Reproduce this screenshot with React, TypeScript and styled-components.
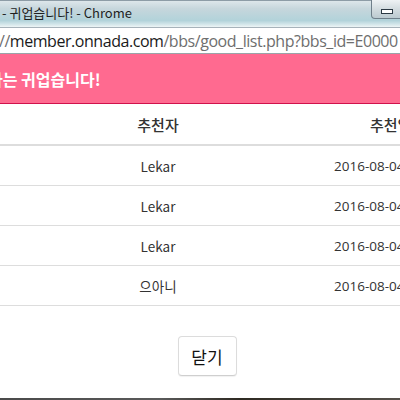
import React from 'react';
import styled, { createGlobalStyle } from 'styled-components';

const GlobalStyle = createGlobalStyle`
  html, body {
    margin: 0;
    padding: 0;
    width: 400px;
    height: 400px;
    overflow: hidden;
    background: #fff;
  }
  body {
    font-family: 'Noto Sans CJK KR', 'Noto Sans', sans-serif;
  }
`;

const Frame = styled.div`
  width: 400px;
  height: 400px;
  display: flex;
  flex-direction: column;
  overflow: hidden;
`;

const TitleBar = styled.div`
  position: relative;
  height: 28px;
  box-sizing: border-box;
  border-top: 1px solid #8d9ca6;
  border-bottom: 1px solid #a7b3ba;
  background: linear-gradient(180deg, #dde6ea 0%, #c6d6dc 30%, #b2d3da 75%, #cfe4e8 88%, #eef5f6 100%);
  display: flex;
  align-items: flex-start;
  padding: 3px 0 0 2px;
`;

const WindowTitle = styled.span`
  font-family: 'Noto Sans CJK KR', 'Noto Sans', sans-serif;
  font-size: 13px;
  line-height: 18px;
  color: #1e1e1e;
  white-space: nowrap;
`;

const MinimizeButton = styled.div`
  position: absolute;
  top: -1px;
  right: -6px;
  width: 35px;
  height: 19px;
  box-sizing: border-box;
  border: 1px solid #6f7f8a;
  border-top: none;
  border-radius: 0 0 0 4px;
  background: linear-gradient(180deg, #eef2f4 0%, #d3dce0 50%, #bccad0 100%);
  display: flex;
  justify-content: flex-start;
  align-items: flex-end;
  padding: 0 0 4px 9px;
`;

const MinimizeGlyph = styled.span`
  display: block;
  width: 10px;
  height: 3px;
  background: #fff;
  border: 1px solid #2c3a44;
`;

const AddressBar = styled.div`
  height: 26px;
  box-sizing: border-box;
  background: #fff;
  border-bottom: 1px solid #9aa3a8;
  display: flex;
  align-items: center;
  overflow: hidden;
`;

const Url = styled.span`
  font-family: 'Open Sans', 'Noto Sans', sans-serif;
  font-size: 16px;
  color: #6e6e6e;
  white-space: nowrap;
  margin-left: -1px;
  letter-spacing: -0.45px;
`;

const Host = styled.span`
  color: #1a1a1a;
`;

const ModalHeader = styled.div`
  height: 50px;
  box-sizing: border-box;
  background: #ff6a90;
  border-bottom: 1px solid #d0124c;
  display: flex;
  align-items: center;
  overflow: hidden;
`;

const ModalTitle = styled.h4`
  margin: 0 0 0 -12px;
  font-family: 'Noto Sans CJK KR', sans-serif;
  font-size: 16px;
  font-weight: 700;
  color: #fff;
  white-space: nowrap;
`;

const Table = styled.div`
  display: flex;
  flex-direction: column;
`;

const Row = styled.div<{ $head?: boolean }>`
  display: grid;
  grid-template-columns: 316px 1fr;
  height: ${(p) => (p.$head ? 42 : 40)}px;
  box-sizing: border-box;
  border-bottom: ${(p) => (p.$head ? '2px' : '1px')} solid #dddddd;
  align-items: center;
  font-family: 'Noto Sans CJK KR', 'Open Sans', sans-serif;
  color: #333;
  font-size: ${(p) => (p.$head ? 15 : 13.5)}px;
  font-weight: ${(p) => (p.$head ? 500 : 400)};
`;

const NameCell = styled.div`
  text-align: center;
  white-space: nowrap;
`;

const DateCell = styled.div<{ $head?: boolean }>`
  padding-left: ${(p) => (p.$head ? 54 : 18)}px;
  white-space: nowrap;
  overflow: hidden;
  font-family: ${(p) => (p.$head ? "'Noto Sans CJK KR', sans-serif" : "'Open Sans', 'Noto Sans', sans-serif")};
`;

const Footer = styled.div`
  flex: 1;
  display: flex;
  justify-content: center;
  align-items: flex-start;
  padding: 30px 0 0 14px;
`;

const CloseButton = styled.button`
  width: 59px;
  height: 40px;
  box-sizing: border-box;
  background: #fff;
  border: 1px solid #dcdcdc;
  border-bottom-color: #cfcfcf;
  border-radius: 4px;
  box-shadow: 0 1px 1px rgba(0, 0, 0, 0.06);
  font-family: 'Noto Sans CJK KR', sans-serif;
  font-size: 17px;
  color: #111;
  padding: 0;
  cursor: pointer;
`;

const BottomEdge = styled.div`
  height: 2px;
  background: linear-gradient(90deg, #4a4a4a 0%, #5a5a5a 40%, #2e2a22 60%, #55504a 100%);
`;

const rows = [
  { name: 'Lekar', date: '2016-08-04' },
  { name: 'Lekar', date: '2016-08-04' },
  { name: 'Lekar', date: '2016-08-04' },
  { name: '으아니', date: '2016-08-04' },
];

const App = () => (
  <>
    <GlobalStyle />
    <Frame>
      <TitleBar>
        <WindowTitle>- 귀업습니다! - Chrome</WindowTitle>
        <MinimizeButton>
          <MinimizeGlyph />
        </MinimizeButton>
      </TitleBar>
      <AddressBar>
        <Url>
          //<Host>member.onnada.com</Host>/bbs/good_list.php?bbs_id=E0000
        </Url>
      </AddressBar>
      <ModalHeader>
        <ModalTitle>다는 귀업습니다!</ModalTitle>
      </ModalHeader>
      <Table>
        <Row $head>
          <NameCell>추천자</NameCell>
          <DateCell $head>추천일</DateCell>
        </Row>
        {rows.map((row, i) => (
          <Row key={i}>
            <NameCell>{row.name}</NameCell>
            <DateCell>{row.date}</DateCell>
          </Row>
        ))}
      </Table>
      <Footer>
        <CloseButton>닫기</CloseButton>
      </Footer>
      <BottomEdge />
    </Frame>
  </>
);

export default App;
